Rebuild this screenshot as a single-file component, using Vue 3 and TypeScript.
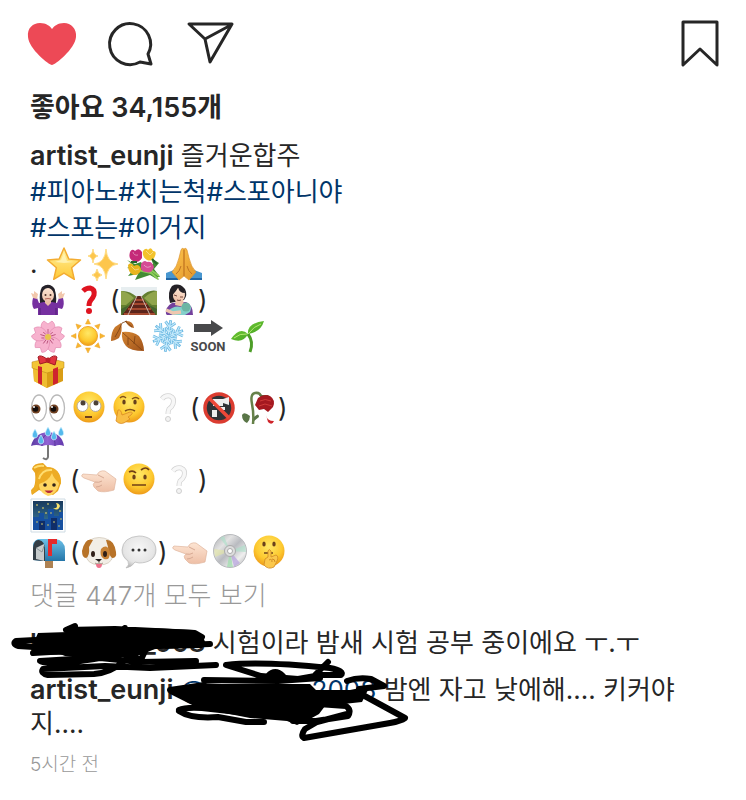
<script setup lang="ts">
import { ref } from 'vue'

interface Piece {
  kind: 'emoji' | 'open' | 'close' | 'dot'
  name?: string
  label?: string
}

const liked = ref(true)

const e = (name: string, label: string): Piece => ({ kind: 'emoji', name, label })
const open: Piece = { kind: 'open' }
const close: Piece = { kind: 'close' }

const emojiLines: Piece[][] = [
  [{ kind: 'dot' }, e('star', '별'), e('sparkles', '반짝임'), e('bouquet', '꽃다발'), e('pray', '두 손 모으기')],
  [e('shrug', '어깨 으쓱'), e('question', '물음표'), open, e('track', '철길'), e('nursing', '아기와 엄마'), close],
  [e('blossom', '벚꽃'), e('sun', '해'), e('leaves', '낙엽'), e('snow', '눈송이'), e('soon', 'SOON'), e('sprout', '새싹')],
  [e('gift', '선물')],
  [e('eyes', '눈'), e('rolling', '눈 굴리는 얼굴'), e('thinking', '생각하는 얼굴'), e('whiteq', '흰 물음표'), open, e('nodrink', '금지 표시'), e('rose', '시든 장미'), close],
  [e('umbrella', '우산과 비')],
  [e('woman', '금발 여자'), open, e('point', '왼쪽을 가리키는 손'), e('brow', '눈썹을 올린 얼굴'), e('whiteq', '흰 물음표'), close],
  [e('night', '밤 도시')],
  [e('mailbox', '우편함'), open, e('dog', '강아지'), e('bubble', '말풍선'), close, e('point', '왼쪽을 가리키는 손'), e('disc', '디스크'), e('shush', '쉿 하는 얼굴')],
]

const firstTags = ['#피아노', '#치는척', '#스포아니야']
const secondTags = ['#스포는', '#이거지']
const rays = [0, 45, 90, 135, 180, 225, 270, 315]
const arms = [10, 70, 130, 190, 250, 310]
</script>

<template>
  <svg class="library" width="0" height="0" aria-hidden="true">
    <defs>
      <radialGradient id="gFace" cx=".5" cy=".35" r=".65">
        <stop offset="0" stop-color="#ffe866" /><stop offset=".65" stop-color="#fdc92f" /><stop offset="1" stop-color="#ee9b19" />
      </radialGradient>
      <linearGradient id="gStar" x1="0" y1="0" x2="0" y2="1">
        <stop offset="0" stop-color="#fff2a0" /><stop offset="1" stop-color="#ffc935" />
      </linearGradient>
      <linearGradient id="gHand" x1="0" y1="0" x2="1" y2="1">
        <stop offset="0" stop-color="#ffc54c" /><stop offset="1" stop-color="#e0952b" />
      </linearGradient>
      <linearGradient id="gSkin" x1="0" y1="0" x2="0" y2="1">
        <stop offset="0" stop-color="#fde5d3" /><stop offset="1" stop-color="#eebfa6" />
      </linearGradient>
      <linearGradient id="gLeaf" x1="0" y1="0" x2="1" y2="1">
        <stop offset="0" stop-color="#d68732" /><stop offset="1" stop-color="#a0521a" />
      </linearGradient>
      <linearGradient id="gGreen" x1="0" y1="0" x2="1" y2="1">
        <stop offset="0" stop-color="#7ed53a" /><stop offset="1" stop-color="#3a9a1f" />
      </linearGradient>
      <linearGradient id="gNight" x1="0" y1="0" x2="0" y2="1">
        <stop offset="0" stop-color="#17385c" /><stop offset="1" stop-color="#3e85a6" />
      </linearGradient>
      <linearGradient id="gPurple" x1="0" y1="0" x2="1" y2="0">
        <stop offset="0" stop-color="#5b3ba3" /><stop offset=".5" stop-color="#9264d4" /><stop offset="1" stop-color="#6238ac" />
      </linearGradient>
      <linearGradient id="gDisc" x1="0" y1="0" x2="1" y2="1">
        <stop offset="0" stop-color="#a6a8ab" /><stop offset=".3" stop-color="#e3e3e3" /><stop offset=".5" stop-color="#b9bbc0" /><stop offset=".75" stop-color="#efefef" /><stop offset="1" stop-color="#a4a4a8" />
      </linearGradient>
      <linearGradient id="gBox" x1="0" y1="0" x2="0" y2="1">
        <stop offset="0" stop-color="#6cc0e8" /><stop offset="1" stop-color="#2475a8" />
      </linearGradient>
      <radialGradient id="gBubble" cx=".5" cy=".4" r=".6">
        <stop offset="0" stop-color="#f7f7f7" /><stop offset=".75" stop-color="#e5e5e5" /><stop offset="1" stop-color="#bcbcbc" />
      </radialGradient>

      <symbol id="star" viewBox="0 0 36 36">
        <path d="M18 2 22.8 13 34.5 14 25.6 21.7 28.3 33.3 18 27.1 7.7 33.3 10.4 21.7 1.5 14 13.2 13Z" fill="url(#gStar)" stroke="#f3ac31" stroke-width="1.500" stroke-linejoin="round" />
        <path d="M18 7 21 15 28 16 18 17 9 16 15 14Z" fill="#fff8c7" opacity=".7" />
      </symbol>
      <symbol id="sparkles" viewBox="0 0 36 36">
        <path d="M20 3Q21 17 32 18 21 19 20 33 19 19 8 18 19 17 20 3Z" fill="#fdc64c" stroke="#ffdc83" />
        <path d="M7 3Q7.500 9 12 10 7.500 11 7 17 6.500 11 2 10 6.500 9 7 3ZM11 23Q11.500 28 16 29 11.500 30 11 35 10.500 30 6 29 10.500 28 11 23Z" fill="#fdc64c" stroke="#ffdc83" />
      </symbol>
      <symbol id="bouquet" viewBox="0 0 36 36">
        <path d="M1 14 9 18 15 16 19 22 27 18 25 12 33 17 28 23 34 31 31 31 33 34 29 32 24 29 9 34 12 28 2 30 8 23 1 22 7 19Z" fill="#438b35" />
        <path d="M12 24 25 27M22 24 32 33M25 24 33 30" stroke="#8dcd58" stroke-width="2" />
        <path d="M4 6Q6 2 9 5 13 1 16 6L16 12Q12 18 7 15 2 13 4 6Z" fill="#c52a79" />
        <path d="M17 5Q20 1 22 4 25 0 27 5 31 5 29 10 27 16 21 14 16 11 17 5Z" fill="#f3c32c" />
        <path d="M2 19Q5 15 8 20 13 17 15 23 14 29 8 29 2 27 2 19Z" fill="#e9b51e" />
        <path d="M15 18Q18 13 21 16 26 15 28 21 26 28 20 26 14 26 15 18Z" fill="#d54c94" />
        <path d="M7 6Q8 10 12 9M20 5 24 9 27 6M5 20 9 24 13 23M18 19Q21 23 25 20" fill="none" stroke="#ffffff" opacity=".4" />
        <path d="M5 16 11 16M26 13 31 18" stroke="#26662a" stroke-width="2" />
      </symbol>
      <symbol id="pray" viewBox="0 0 36 36">
        <path d="M0 27 8 24 14 30 12 34H0ZM36 27 28 24 22 30 24 34H36Z" fill="#4896cf" />
        <path d="M0 33H12M24 33H36" stroke="#2166a5" stroke-width="2" />
        <path d="M18 30 13 34 6 26Q11 21 13 12L15 4Q16 1 18 3ZM18 30 23 34 30 26Q25 21 23 12L21 4Q20 1 18 3Z" fill="url(#gHand)" stroke="#dc942c" stroke-width=".7" />
        <path d="M18 4V30M15 20Q14 25 10 28M21 20Q22 25 26 28" fill="none" stroke="#bf7422" />
      </symbol>
      <symbol id="shrug" viewBox="0 0 36 36">
        <path d="M12 5Q18 1 24 6 27 13 26 21L10 21Q9 10 12 5Z" fill="#252229" />
        <path d="M8 33 8 26 4 27Q1 23 3 16L7 16 9 21 14 20 22 20 27 21 29 16 33 16Q35 23 32 27L28 26 28 33Z" fill="#7630a0" />
        <path d="M15 18H21V21L18 24 15 21Z" fill="#eabda2" />
        <ellipse cx="18" cy="13" rx="6" ry="7" fill="url(#gSkin)" />
        <path d="M11 13Q12 7 17 5 23 6 25 14 26 5 20 3 11 1 11 13Z" fill="#252229" />
        <path d="M3 16 1 11 4 12 4 9 8 12 7 17ZM33 16 35 11 32 12 32 9 28 12 29 17Z" fill="#f1c7ac" />
        <circle cx="15.500" cy="13" r="1" fill="#4b3027" /><circle cx="20.500" cy="13" r="1" fill="#4b3027" />
        <path d="M15 17Q18 16 21 17" fill="none" stroke="#b36358" />
        <path d="M10 26 10 33M26 26 26 33" stroke="#522079" />
      </symbol>
      <symbol id="question" viewBox="0 0 36 36">
        <path d="M13 9Q16 6 20 6 25 7 24 13 23 16 21 18 19 20 19 24" fill="none" stroke="#df1420" stroke-width="5" />
        <circle cx="19" cy="29" r="3" fill="#df1420" />
      </symbol>
      <symbol id="whiteq" viewBox="0 0 36 36">
        <path d="M12 9Q15 5 20 6 25 8 23 14 22 17 19 19 18 21 18 24" fill="none" stroke="#d3d3d3" stroke-width="5" />
        <path d="M12 9Q15 5 20 6 25 8 23 14 22 17 19 19 18 21 18 24" fill="none" stroke="#f7f7f7" stroke-width="3.500" /><circle cx="18" cy="29" r="2.500" fill="#f3f3f3" stroke="#cfcfcf" />
      </symbol>
      <symbol id="track" viewBox="0 0 36 36">
        <path d="M0 5H36V33H0Z" fill="#e7eef0" />
        <path d="M0 9Q8 8 16 15L20 15Q28 7 36 9V33H0Z" fill="#637f30" />
        <path d="M0 9Q7 10 13 16L5 23 0 23ZM36 9Q29 10 23 16L31 23H36Z" fill="#91a54c" />
        <path d="M16 14H20L35 33H1Z" fill="#5c251b" />
        <path d="M14 18H23M11 22H26M7 27H30M3 32H34" stroke="#a4492f" stroke-width="2" />
        <path d="M16 14 7 33M20 14 29 33" stroke="#c9b5aa" />
        <path d="M0 27 8 23 1 33M36 27 28 23 35 33" fill="#45642f" />
      </symbol>
      <symbol id="nursing" viewBox="0 0 36 36">
        <path d="M11 4Q18 0 24 7 27 13 23 18L9 21Q6 10 11 4Z" fill="#242126" />
        <path d="M5 32Q4 25 11 21L25 20Q32 23 32 33H6Z" fill="#74419d" />
        <path d="M15 17H22L23 25 14 23Z" fill="#eec2a8" />
        <ellipse cx="18" cy="13" rx="6" ry="7" fill="url(#gSkin)" transform="rotate(10 18 13)" />
        <path d="M10 14Q16 9 17 5 18 11 24 11 23 3 16 3 9 5 10 14Z" fill="#242126" />
        <path d="M13 13 16 14M19 15 22 15M16 18Q18 19 20 18" fill="none" stroke="#75463b" />
        <path d="M7 29Q13 23 20 25L26 21Q32 24 29 30L24 33H14Q9 33 7 29Z" fill="#84d0cb" />
        <circle cx="25" cy="25" r="4.500" fill="#6bb5a3" /><path d="M5 28 12 31 20 30" stroke="#efc7af" stroke-width="3.500" fill="none" />
      </symbol>
      <symbol id="blossom" viewBox="0 0 36 36">
        <g v-for="a in [0, 72, 144, 216, 288]" :key="a" :transform="`rotate(${a} 18 19)`">
          <path d="M18 19C9 14 10 5 14 3L18 6 22 3C26 6 27 14 18 19Z" fill="#f7b2ce" stroke="#e48db2" stroke-width=".7" />
          <path d="M18 16V11M16 16 15 13M20 16 21 13" stroke="#b34973" stroke-width=".8" />
        </g>
        <circle cx="18" cy="19" r="3" fill="#e7c44d" />
      </symbol>
      <symbol id="sun" viewBox="0 0 36 36">
        <path v-for="a in rays" :key="a" d="M18 1 20.500 6H15.500Z" fill="#f8b62e" stroke="#eca12b" stroke-width=".5" :transform="`rotate(${a} 18 18)`" />
        <circle cx="18" cy="18" r="9.500" fill="url(#gFace)" stroke="#efa52a" />
      </symbol>
      <symbol id="leaves" viewBox="0 0 36 36">
        <path d="M12 14Q22 13 29 18 34 25 34 33 20 33 16 28 11 22 12 14Z" fill="url(#gLeaf)" />
        <path d="M11 5Q13 13 9 20 4 23 1 23 1 14 5 9ZM15 3Q23 2 24 10 19 10 15 3Z" fill="url(#gLeaf)" />
        <path d="M12 5 9 12 5 19M15 3 22 9M13 15 32 32M18 20 18 27M24 26 25 18M12 5 17 3" fill="none" stroke="#7b4014" stroke-width=".8" />
      </symbol>
      <symbol id="snow" viewBox="0 0 36 36">
        <g v-for="a in arms" :key="a" :transform="`rotate(${a} 18 18)`">
          <path d="M18 18V2M13 4 18 9 23 4M14 10 18 14 22 10" stroke="#6bb8e2" stroke-width="2.800" fill="none" />
          <path d="M18 18V3M13 4 18 9 23 4M14 10 18 14 22 10" stroke="#c5eafb" stroke-width="1.200" fill="none" />
        </g>
      </symbol>
      <symbol id="soon" viewBox="0 0 36 36">
        <path d="M4 6H21V2L33 10 21 18V14H4Z" fill="#48494b" />
        <text x="18" y="33" text-anchor="middle" font-family="Roboto, sans-serif" font-size="13" font-weight="700" fill="#48494b">SOON</text>
      </symbol>
      <symbol id="sprout" viewBox="0 0 36 36">
        <path d="M20 34Q24 24 18 16" fill="none" stroke="#4d9e28" stroke-width="3" />
        <path d="M18 16Q17 5 34 3 31 14 18 16ZM18 16Q10 8 1 21 13 26 18 16Z" fill="url(#gGreen)" />
        <path d="M18 16Q24 8 31 6M17 16Q10 15 4 20" fill="none" stroke="#b5e974" />
      </symbol>
      <symbol id="gift" viewBox="0 0 36 36">
        <path d="M3 12 17 17 33 11V27L17 34 4 27Z" fill="#d99d16" /><path d="M17 17V34L4 27 3 12Z" fill="#efbd31" />
        <path d="M2 8 19 4 34 8V14L17 19 2 14Z" fill="#f3c536" stroke="#b78116" stroke-width=".5" />
        <path d="M8 12 12 13V31L8 29ZM23 15 28 13V29L23 31Z" fill="#cf242e" />
        <path d="M17 5Q10 0 8 3L10 10 17 8 25 11 27 3Q24 0 19 5Z" fill="#df3540" stroke="#9f1923" />
        <circle cx="18" cy="6" r="2.500" fill="#bb202c" />
      </symbol>
      <symbol id="eyes" viewBox="0 0 36 36">
        <ellipse cx="9" cy="18" rx="7.500" ry="13" fill="#fff" stroke="#b9b9b9" stroke-width="1.300" /><ellipse cx="27" cy="18" rx="7.500" ry="13" fill="#fff" stroke="#b9b9b9" stroke-width="1.300" />
        <circle cx="6" cy="19" r="4.500" fill="#704021" /><circle cx="24" cy="19" r="4.500" fill="#704021" /><circle cx="5.500" cy="19" r="2.800" fill="#120d0b" /><circle cx="23.500" cy="19" r="2.800" fill="#120d0b" />
        <circle cx="4" cy="17" r="1" fill="#fff" /><circle cx="22" cy="17" r="1" fill="#fff" />
      </symbol>
      <symbol id="rolling" viewBox="0 0 36 36">
        <circle cx="19" cy="17" r="15.500" fill="url(#gFace)" />
        <circle cx="12.500" cy="16" r="5.500" fill="#fff" stroke="#b6a998" /><circle cx="25.500" cy="16" r="5.500" fill="#fff" stroke="#b6a998" />
        <circle cx="13" cy="13" r="2.500" fill="#4c4037" /><circle cx="26" cy="13" r="2.500" fill="#4c4037" /><path d="M15 27H22" stroke="#70401b" stroke-width="2" />
      </symbol>
      <symbol id="thinking" viewBox="0 0 36 36">
        <circle cx="19" cy="17" r="15.500" fill="url(#gFace)" /><ellipse cx="14" cy="12" rx="1.700" ry="2.500" fill="#66411c" /><ellipse cx="25" cy="12" rx="1.700" ry="2.500" fill="#66411c" />
        <path d="M10 8Q13 5 16 8M22 9Q26 6 29 9M15 21Q20 18 25 21" fill="none" stroke="#7f501b" stroke-width="1.500" />
        <path d="M8 20Q11 19 12 25L20 22Q24 22 21 25L18 27 20 29 17 31Q11 36 6 31Z" fill="#f9be45" stroke="#d98a23" stroke-width=".8" />
      </symbol>
      <symbol id="nodrink" viewBox="0 0 36 36">
        <circle cx="18" cy="18" r="14" fill="#303337" stroke="#db3c30" stroke-width="3.500" />
        <path d="M12 9H22L28 7V15L22 13V16H12ZM11 20H16V27H11ZM19 17H24V20H19Z" fill="#eee" /><path d="M8 8 28 28" stroke="#ed4838" stroke-width="3.500" />
      </symbol>
      <symbol id="rose" viewBox="0 0 36 36">
        <path d="M12 34Q13 24 11 14 9 4 14 3 20 2 21 9" fill="none" stroke="#668149" stroke-width="2.500" />
        <path d="M9 26Q3 21 1 25 1 31 6 33 9 30 9 26ZM13 27Q18 22 18 27L13 31ZM18 5 28 5 22 10Z" fill="#597547" />
        <path d="M17 8Q23 3 29 6 35 10 32 17L27 22 23 19 18 20 14 15Z" fill="#a51920" /><path d="M19 11Q24 8 30 11M18 16 24 14 31 16" fill="none" stroke="#cf3b39" />
        <path d="M25 25Q26 31 33 31 31 36 27 32Z" fill="#cf252b" />
      </symbol>
      <symbol id="umbrella" viewBox="0 0 36 36">
        <path d="M18 17V31Q17 35 13 32" fill="none" stroke="#777" stroke-width="2" /><path d="M1 20Q4 7 18 6 32 7 34 20 29 18 25 20 18 18 12 20 6 18 1 20Z" fill="url(#gPurple)" />
        <path d="M18 7Q10 12 12 20M18 7Q26 12 25 20" fill="none" stroke="#5c379e" />
        <path v-for="p in ['5 3', '18 1', '31 1', '11 9', '24 5']" :key="p" d="M0 0C-3 5-4 8 0 9 4 8 3 5 0 0Z" fill="#55b9ec" stroke="#d4f4ff" stroke-width=".7" :transform="`translate(${p})`" />
      </symbol>
      <symbol id="woman" viewBox="0 0 36 36">
        <path d="M2 7Q3 1 13 1L17 5Q31 7 31 21L28 29 23 33 9 28 2 33Q0 28 4 25 6 19 5 11Z" fill="#e9a51f" />
        <path d="M10 16Q14 10 19 9 29 12 29 22 27 32 18 34 10 31 9 24Z" fill="#ffd560" />
        <path d="M2 32Q9 29 9 22 19 19 22 11 24 18 31 22 31 5 17 5 6 7 6 18 6 25 1 28Z" fill="#edac25" />
        <path d="M9 17Q12 7 22 8M4 6Q9 3 14 4" fill="none" stroke="#ffdd70" stroke-width="2" />
        <circle cx="15" cy="23" r="1.800" fill="#302219" /><circle cx="24" cy="23" r="1.800" fill="#302219" /><path d="M16 29Q19 32 22 29Z" fill="#ac1f39" stroke="#b62c3b" stroke-width="1.200" />
      </symbol>
      <symbol id="point" viewBox="0 0 36 36">
        <path d="M2 12 16 13Q18 8 24 9L35 17 33 28Q23 31 17 29L13 25Q11 22 14 20L3 16Q-1 14 2 12Z" fill="url(#gSkin)" stroke="#dfb49c" stroke-width=".7" />
        <path d="M14 20Q18 21 21 19M15 25Q18 25 21 23M17 13 23 16" fill="none" stroke="#d7aa94" />
      </symbol>
      <symbol id="brow" viewBox="0 0 36 36">
        <circle cx="18" cy="17" r="15.500" fill="url(#gFace)" /><path d="M8 10Q12 8 15 11M20 8Q25 4 28 8M11 23H25" fill="none" stroke="#714016" stroke-width="1.700" /><ellipse cx="13" cy="15" rx="1.700" ry="2.500" fill="#6d431c" /><ellipse cx="24" cy="15" rx="1.700" ry="2.500" fill="#6d431c" />
      </symbol>
      <symbol id="night" viewBox="0 0 36 36">
        <path d="M1 1H35V34H1Z" fill="#fff" stroke="#cedbe3" /><path d="M3 3H33V32H3Z" fill="url(#gNight)" />
        <path d="M3 19H9V15H14V21H18V11H24V18H29V14H33V32H3Z" fill="#1650a0" /><path d="M9 23H15V32H9ZM21 20H27V32H21Z" fill="#102e68" />
        <path d="M7 6V8M13 9V11M18 5V7M9 13V15M16 14V16M30 12V14M6 24H8M11 26H13M20 15H22M23 24H25M30 21H32M17 27H19M28 28H30" stroke="#c8bf69" stroke-width="1.200" />
        <path d="M26 5Q29 11 23 10 28 14 30 8 29 5 26 5Z" fill="#fae36e" />
      </symbol>
      <symbol id="mailbox" viewBox="0 0 36 36">
        <path d="M15 26H23V34H15Z" fill="#ae8253" /><path d="M8 5H25Q35 6 35 16V27H12L3 26V15Q2 7 8 5Z" fill="url(#gBox)" />
        <path d="M3 26V14Q4 5 9 6 15 7 15 16V27Z" fill="#343e46" /><path d="M6 14 14 10V27L6 25Z" fill="#c6cbcc" /><path d="M6 14 12 18 14 12" fill="none" stroke="#8c989c" /><path d="M18 22V5H27V10H22V22Z" fill="#e52a2c" />
      </symbol>
      <symbol id="dog" viewBox="0 0 36 36">
        <path d="M9 6Q18 1 28 6L32 22Q30 31 18 31 5 30 5 20Z" fill="#f2eee6" stroke="#c5b9a6" stroke-width=".6" />
        <path d="M12 6Q4 3 1 17 1 24 5 24 9 22 8 13ZM25 6Q33 5 35 18 36 24 31 24 27 20 27 13Z" fill="#b87328" /><path d="M20 15Q26 9 29 18 29 27 23 25 18 22 20 15Z" fill="#c98336" />
        <ellipse cx="12" cy="20" rx="2" ry="3" fill="#302018" /><ellipse cx="24" cy="20" rx="2" ry="3" fill="#302018" /><path d="M14 25H21L18 28Z" fill="#25201f" /><path d="M18 27V29M14 29Q16 31 18 29 20 31 22 29" stroke="#8f7b6c" fill="none" stroke-width=".8" /><path d="M15 30H21Q21 34 18 34 15 34 15 30Z" fill="#ef738c" />
      </symbol>
      <symbol id="bubble" viewBox="0 0 36 36">
        <path d="M18 2C27 2 35 7 35 16S27 29 18 29L14 28Q11 33 5 34 9 31 7 27 1 23 1 16 2 3 18 2Z" fill="url(#gBubble)" stroke="#b6b6b6" stroke-width=".7" /><circle cx="12" cy="16" r="1.500" fill="#333" /><circle cx="18" cy="16" r="1.500" fill="#333" /><circle cx="24" cy="16" r="1.500" fill="#333" />
      </symbol>
      <symbol id="disc" viewBox="0 0 36 36">
        <circle cx="18" cy="17" r="16.500" fill="url(#gDisc)" stroke="#b8babd" /><path d="M18 17 8 4 12 2ZM18 17 33 11 34 18Z" fill="#aadfc8" opacity=".6" /><path d="M18 17 15 33 21 33Z" fill="#a4dcb0" opacity=".8" /><path d="M18 17 22 33 28 29Z" fill="#b5a1dd" opacity=".7" /><path d="M18 17 2 15 3 23Z" fill="#e3e6a2" opacity=".6" />
        <circle cx="18" cy="17" r="5.500" fill="#ddd" stroke="#aaa" /><circle cx="18" cy="17" r="2.500" fill="#fff" stroke="#aaa" />
      </symbol>
      <symbol id="shush" viewBox="0 0 36 36">
        <circle cx="17" cy="17" r="15.500" fill="url(#gFace)" /><ellipse cx="12" cy="10" rx="1.700" ry="2.500" fill="#6b421c" /><ellipse cx="22" cy="10" rx="1.700" ry="2.500" fill="#6b421c" />
        <path d="M12 19H21" stroke="#6e431b" stroke-width="1.500" /><path d="M16 17Q17 14 19 17L19 23 24 21Q27 22 25 27L22 33Q16 36 12 31L13 25 16 23Z" fill="#fbc84c" stroke="#d08a25" stroke-width=".8" /><path d="M17 26Q20 24 20 28M20 25Q23 25 23 28" fill="none" stroke="#d08a25" />
      </symbol>
    </defs>
  </svg>

  <article class="post">
    <header class="actions">
      <button class="action" :class="{ liked }" type="button" aria-label="좋아요" :aria-pressed="liked" @click="liked = !liked">
        <svg width="50" height="48" viewBox="0 0 50 48"><path class="heart" d="M25 44C22 44 2 28 1 16C0 7 6 2 13 2C19 2 23 5 25 8C27 5 31 2 37 2C44 2 50 8 49 16C48 28 28 44 25 44Z" /></svg>
      </button>
      <button class="action" type="button" aria-label="댓글">
        <svg width="50" height="48" viewBox="0 0 50 48"><path d="M41 33A20.500 20.500 0 1 0 33 41L44 43Z" /></svg>
      </button>
      <button class="action" type="button" aria-label="공유">
        <svg width="50" height="48" viewBox="0 0 50 48"><path d="M2 3H45L23 41 18 18ZM18 18 44 4" /></svg>
      </button>
      <button class="action save" type="button" aria-label="저장">
        <svg width="42" height="52" viewBox="0 0 42 52"><path d="M4 3H38V46L21 30 4 46Z" /></svg>
      </button>
    </header>

    <p class="likes">좋아요 34,155개</p>

    <section class="caption">
      <p><a class="author" href="#artist_eunji">artist_eunji</a> 즐거운합주</p>
      <p><a v-for="tag in firstTags" :key="tag" class="tag" :href="tag">{{ tag }}</a></p>
      <p><a v-for="tag in secondTags" :key="tag" class="tag" :href="tag">{{ tag }}</a></p>
      <p v-for="(line, i) in emojiLines" :key="i" class="emoji-line">
        <template v-for="(piece, j) in line" :key="j">
          <svg v-if="piece.kind === 'emoji'" class="emoji" role="img" :aria-label="piece.label"><use :href="`#${piece.name}`" /></svg>
          <span v-else :class="piece.kind">{{ piece.kind === 'open' ? '(' : piece.kind === 'close' ? ')' : '.' }}</span>
        </template>
      </p>
    </section>

    <a class="all" href="#comments">댓글 447개 모두 보기</a>

    <section id="comments" class="comments">
      <p><b>h_________008</b> 시험이라 밤새 시험 공부 중이에요 ㅜ.ㅜ</p>
      <p><a class="author" href="#artist_eunji">artist_eunji</a> <a class="tag" href="#mention">@_________2008</a> 밤엔 자고 낮에해.... 키커야지....</p>
      <svg class="scribble" width="420" height="126" viewBox="0 620 420 126" aria-hidden="true">
        <path class="ink" d="M38 633 68 632 110 630 151 628 194 630 203 636 205 642 202 648 155 649 140 655 110 659 65 656 55 652 33 655 31 648 38 646 33 644Z" />
        <g class="pen">
          <path d="M75 626 66 630 115 629 195 633 202 637M125 628 126 633M35 640 16 641Q12 644 18 646L50 648 130 647 210 644M33 653 85 650 106 657 40 661Q46 667 100 658L140 662 196 661M216 665 150 668 105 666 43 669Q40 673 48 675L94 674Q110 673 123 662L139 647M146 649 138 666M120 650 139 659" />
          <path d="M226 665Q260 661 330 668 345 671 341 675L321 675 298 679 261 676 226 665M328 662 315 675M268 676Q275 668 283 676M204 680 278 681 320 678" />
          <path d="M170 690 204 685M171 691 203 707M179 710Q185 707 202 708L247 713M179 711Q191 719 218 717L246 722 264 722M347 681Q358 677 371 679L384 686 359 689M361 694 405 718Q401 721 390 723L304 738Q300 736 305 729L317 722 347 714M318 704 346 706Q352 710 348 716L316 721 293 721" />
        </g>
        <path class="ink" d="M169 690 202 683 222 684 310 684 316 690 350 690 370 686 362 702 325 706 319 714 310 719 297 725 287 721 250 718 214 711Z" />
      </svg>
    </section>

    <time class="age">5시간 전</time>
  </article>
</template>

<style>
body {
  margin: 0;
  background: #fff;
}
</style>

<style scoped>
.library {
  position: absolute;
}
.post {
  display: flex;
  flex-direction: column;
  padding: 0 30px 24px;
  color: #262626;
  font-family: Inter, "Noto Sans CJK KR", sans-serif;
  font-size: 26px;
  line-height: 36px;
}
p {
  margin: 0;
}
a {
  color: inherit;
  text-decoration: none;
}
.actions {
  display: flex;
  gap: 30px;
  align-items: center;
  height: 90px;
  margin: 0 -5px 0 -3px;
}
.action {
  display: flex;
  padding: 0;
  border: 0;
  background: none;
  cursor: pointer;
}
.save {
  margin-left: auto;
}
.action svg {
  overflow: visible;
}
.action path {
  fill: none;
  stroke: #262626;
  stroke-width: 3;
  stroke-linejoin: round;
}
.liked .heart {
  fill: #ed4956;
  stroke: none;
}
.likes {
  font-size: 27px;
  font-weight: 600;
}
.caption {
  margin-top: 12px;
}
.author,
b {
  font-weight: 600;
}
.author {
  font-size: 27px;
  line-height: 1;
}
.tag {
  color: #003569;
}
.emoji-line {
  display: flex;
  gap: 4px;
  height: 36px;
}
.emoji {
  flex: none;
  width: 36px;
  height: 36px;
}
.dot {
  width: 12px;
}
.open {
  width: 11px;
  margin-right: -4px;
}
.close {
  width: 10px;
  margin-left: -3px;
}
.all {
  align-self: flex-start;
  margin-top: 8px;
  color: #999;
  font-weight: 300;
}
.comments {
  position: relative;
  display: flex;
  flex-direction: column;
  gap: 13px;
  margin-top: 12px;
  line-height: 34px;
}
.scribble {
  position: absolute;
  top: -6px;
  left: -30px;
}
.ink {
  fill: #000;
}
.pen {
  fill: none;
  stroke: #000;
  stroke-width: 6;
  stroke-linecap: round;
  stroke-linejoin: round;
}
.age {
  margin-top: 10px;
  color: #999;
  font-size: 19px;
  font-weight: 300;
  line-height: 28px;
}
</style>
